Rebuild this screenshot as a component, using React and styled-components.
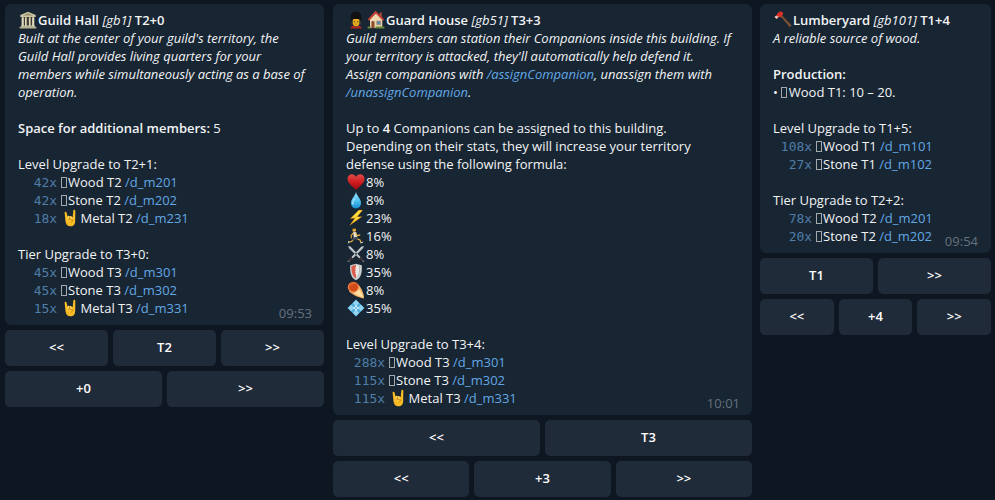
import React from "react";
import styled, { createGlobalStyle } from "styled-components";

const GlobalStyle = createGlobalStyle`
  * { box-sizing: border-box; }
  body { margin: 0; background: #0e1621; }
`;

const Page = styled.main`
  display: flex;
  align-items: flex-start;
  width: 995px;
  height: 500px;
  padding: 4px 4px 0 5px;
  overflow: hidden;
  background: #0e1621;
  color: #f2f4f5;
  font: 13px/18px "Open Sans", "Noto Sans", sans-serif;
`;
const Column = styled.section`
  display: grid;
  flex: none;
  gap: 5px;
  width: ${(p) => p.$width}px;
  margin-right: ${(p) => p.$gap || 0}px;
`;
const Bubble = styled.article`
  display: flex;
  flex-direction: column;
  padding: 7px 13px 3px;
  border-radius: 6px;
  background: #182533;
`;
const Line = styled.div`
  height: 18px;
  white-space: pre;
`;
const Description = styled(Line)`
  font-style: italic;
  letter-spacing: -0.014px;
`;
const Strong = styled.b`
  font-weight: 600;
`;
const Link = styled.a`
  color: #62a8e4;
`;
const Amount = styled.code`
  color: #4f7ea8;
  font: 13px/18px "DejaVu Sans Mono", monospace;
`;
const Time = styled.time`
  align-self: flex-end;
  height: 18px;
  margin: -13px ${(p) => (p.$tight ? 0 : -1)}px 0 0;
  color: #64727f;
`;
const Keys = styled.div`
  display: grid;
  grid-template-columns: repeat(${(p) => p.$count}, 1fr);
  gap: 5px;
`;
const Key = styled.button`
  height: 36px;
  padding: 0 0 2px;
  border: 0;
  border-radius: 5px;
  background: #1f2b38;
  color: #fff;
  font: 600 13px/18px "Open Sans", "Noto Sans", sans-serif;
`;
const Glyph = styled.svg`
  width: 18px;
  height: 18px;
  margin: 0 1px;
  vertical-align: top;
`;
const MissingGlyph = styled.span`
  display: inline-block;
  width: 6px;
  height: 11px;
  margin: 0 1.5px 0 0;
  border: 1px solid #a4aaab;
  vertical-align: -1px;
`;

const art = {
  hall: (
    <>
      <path d="M9 .8 16.7 4v2H1.3V4z" fill="#c9c3a0" />
      <path d="M9 2.2 14 4.6H4z" fill="#99916f" />
      <path d="M3 6h12v9H3z" fill="#3d3a33" />
      <path d="M2.6 6.2h2.2V15H2.6zM6 6.2h1.7V15H6zM9.9 6.2h1.7V15H9.9zM13.1 6.2h2.2V15h-2.2z" fill="#dfd9b9" />
      <path d="M2 14.6h14v1.2H2z" fill="#e0dbc0" />
      <path d="M.6 15.8h16.8v1.7H.6z" fill="#bbb48f" />
    </>
  ),
  guard: (
    <>
      <path d="M5.8 8h6.6v3.4c0 2.6-1.2 4-3.3 4s-3.3-1.4-3.3-4z" fill="#eab023" />
      <path d="M4.2 10C3 4.4 4 .8 9.1 .8S15.2 4.4 14 10l-1.4-1.6c-2.2-.8-4.8-.8-7 0z" fill="#121111" />
      <path d="M6.9 10.2h1.2v1H6.9zm3.3 0h1.2v1h-1.2z" fill="#4c3012" />
      <path d="M7.9 13h2.5" stroke="#a46a19" strokeWidth=".7" />
      <path d="M5.2 10v3.5m7.8-3.5v3.5" stroke="#7d6023" strokeWidth=".7" />
      <path d="M3.7 17.5c.1-1.6 1-2.4 2.9-2.7l2.5 1.4 2.5-1.4c1.9.3 2.8 1.1 2.9 2.7z" fill="#b8261f" />
    </>
  ),
  house: (
    <>
      <path d="M12.6 1.5h2.2v5h-2.2z" fill="#a64b35" />
      <path d="M3 8 9 2.2 15.3 8v9H3z" fill="#eed7ae" />
      <path d="m1.4 9.1 7.2-8 8 8" fill="none" stroke="#c44336" strokeWidth="1.9" />
      <path d="M4.4 10.2h3.1v7.1H4.4z" fill="#8d4c31" />
      <path d="M9.7 10h4v3.8h-4z" fill="#598baf" stroke="#b48761" strokeWidth=".6" />
      <path d="M.7 15.5h3v2h-3zm7.8 0h8.9v2H8.5z" fill="#66893b" />
    </>
  ),
  axe: (
    <>
      <path d="M6.4 2.6 17.2 14c.6 1.1-.9 2.3-1.8 1.5L5.4 4z" fill="#8c5a38" />
      <path d="m8 5.2 8.3 9.5" stroke="#5c3825" strokeWidth=".7" />
      <path d="M5.4.8c1.7-.6 3.6.3 3.9 2L6.6 6.4C5.2 5.5 4.2 6 2.8 8L.6 6C2 5 3.1 2.9 5.4.8z" fill="#dc3028" />
      <path d="M.5 6 2.7 8c1-1.7 1.8-2.2 2.4-2.3L1.8 4.9z" fill="#ded6d0" />
    </>
  ),
  heart: (
    <>
      <path d="M9 17C5.4 13.2.7 10.3.5 5.7.3 1.4 6.5-.8 9 4c2.5-4.8 8.7-2.6 8.5 1.7C17.3 10.3 12.6 13.2 9 17z" fill="url(#heartRed)" />
      <defs>
        <linearGradient id="heartRed" x1="0" y1="0" x2="0" y2="1">
          <stop stopColor="#e24a48" /><stop offset=".55" stopColor="#cc191d" /><stop offset="1" stopColor="#980c12" />
        </linearGradient>
      </defs>
    </>
  ),
  drop: (
    <>
      <path d="M9 .8c.5 3.8 5 6.8 5 11.2 0 3.2-2.1 5.4-5 5.4S4 15.2 4 12C4 7.6 8.5 4.6 9 .8z" fill="url(#dropBlue)" />
      <path d="M7.8 7.5c-1.7 2.2-2.5 4.3-1.7 6" stroke="#b8ecff" strokeWidth="1.2" fill="none" />
      <defs>
        <linearGradient id="dropBlue" x1="0" y1="0" x2="0" y2="1">
          <stop stopColor="#9cdef6" /><stop offset=".5" stopColor="#54c5f4" /><stop offset="1" stopColor="#168fd1" />
        </linearGradient>
      </defs>
    </>
  ),
  bolt: (
    <>
      <path d="m11.8 1-8.7 8.8 4.7-.5-5.5 7.5 13-9.3-4.9.3L15.8 1z" fill="#f9ae19" />
      <path d="m11.9 1.7-7 7 4.6-.5-4.1 5.3 7.8-5.4-5 .1L14.5 1.7z" fill="#ffe34a" />
    </>
  ),
  runner: (
    <>
      <circle cx="7.2" cy="2.9" r="1.9" fill="#e9b13a" />
      <path d="M5.2 3C4.9.8 8.2.1 9.1 1.9L7 2.1z" fill="#5c3a1b" />
      <path d="M6.8 5.8 4.2 8.2l.2 2.6" fill="none" stroke="#dca536" strokeWidth="1.2" strokeLinecap="round" />
      <path d="m6.4 5 2.9.3.8 5-3.4.6z" fill="#e8e6df" />
      <path d="m8.7 6.4 1.7 2.4 2.4-.9" fill="none" stroke="#f0bb42" strokeWidth="1.2" strokeLinecap="round" />
      <path d="m6.7 10.3 3.4-.5 1.4 2-1.3 1-2-.9-1.8 2.2-1.6-.8z" fill="#4a5260" />
      <path d="m10.6 12.1 2.4.9 1 2.8M5.8 13.3l-1.5 1.4-2.4.2" fill="none" stroke="#e3ad3b" strokeWidth="1.2" />
      <path d="m13.5 16 2.6-.9M1.9 14l-.4 2.3" stroke="#ddd" strokeWidth="1" />
    </>
  ),
  swords: (
    <>
      <path d="m1.2 1 2.5.7 10 10.6-1.3 1.2L2 3.3zM16.8 1l-2.5.7-10 10.6 1.3 1.2L16 3.3z" fill="#d6dee2" />
      <path d="m2.3 2.2 10.4 10.7M15.7 2.2 5.3 12.9" stroke="#7b858d" strokeWidth=".5" />
      <path d="m2.8 11.4 3.7 3.7m8.7-3.7-3.7 3.7" stroke="#343035" strokeWidth="1.3" />
      <path d="m4.2 13.4-2.6 2.8m12.2-2.8 2.6 2.8" stroke="#49383a" strokeWidth="1.6" />
      <path d="M.7 16.3h1.8m13 0h1.8" stroke="#8f9094" strokeWidth="1.1" />
    </>
  ),
  shield: (
    <>
      <path d="M3.2 2.2 9 .7l5.8 1.5c.5 7.3-.6 12.5-5.8 15C3.8 14.7 2.7 9.5 3.2 2.2z" fill="#c7cbcb" />
      <path d="M4.5 3.3 9 2v13.5C5.4 13.2 4.3 9.1 4.5 3.3z" fill="#dc5b4c" />
      <path d="m9 2 4.5 1.3C13.7 9.1 12.6 13.2 9 15.5z" fill="#eceae5" />
      <path d="m9 4-1.2.9L9 5.8l-1.2.9L9 7.6l-1.2.9L9 9.4l-1.2.9L9 11.2z" fill="#efe2df" />
      <path d="M12.6 3.1c.3 5.3-.5 9-2.9 11.3" fill="none" stroke="#989ea0" strokeWidth=".7" />
    </>
  ),
  meteor: (
    <>
      <path d="M2 10.2C4 12.5 10.4 16.5 17 17.4 17.3 12.5 14 6.2 11.3 3.4z" fill="#f3b06b" />
      <path d="M5 10.5c3.1 2.5 7.3 5.2 11.3 6.1C15.8 13 12.7 8.7 10.5 7z" fill="#ffe0a1" />
      <circle cx="6.3" cy="6.2" r="5.5" fill="#ee8244" />
      <circle cx="6.5" cy="5.9" r="4.4" fill="#cf4b19" />
      <path d="M3.5 4.6c1-2 3.5-2.7 5-1.7" stroke="#e87935" strokeWidth="1" fill="none" />
    </>
  ),
  diamond: (
    <>
      <path d="m9 .5 8.5 8.5L9 17.5.5 9z" fill="#4ba7d7" />
      <path d="m9 1 3.2 3.2L9 7.4 5.8 4.2zM4.2 5.8 7.4 9l-3.2 3.2L1 9zM13.8 5.8 17 9l-3.2 3.2L10.6 9zM9 10.6l3.2 3.2L9 17l-3.2-3.2z" fill="#90d4ef" />
      <path d="m9 6 3 3-3 3-3-3z" fill="#d0f1fb" />
      <path d="m5 5 8 8m0-8-8 8" stroke="#5aafd9" strokeWidth=".8" />
    </>
  ),
  horns: (
    <>
      <path d="M2.6 3.6c0-1 1.8-1.1 2 .1L5.7 8h5l.6-6.3c.2-1.3 2-1.2 2 .2l-.1 10c-.2 3.3-1.6 5.4-4.7 5.4s-4.8-2.2-5-5.1z" fill="#f8bd25" />
      <path d="M5.5 7.2c1-.8 1.7-.3 2 .4.8-.8 2.2-.6 2.4.5l.2 3-4.3.2z" fill="#ffd85a" />
      <path d="M6 10.3c2.2-.6 4 .1 5 1l-2 2.3M7.6 7.8v2.3" fill="none" stroke="#bf7414" strokeWidth=".8" />
      <path d="m4.2 12.8 2 3.2" stroke="#dda01d" strokeWidth=".8" />
    </>
  ),
};

const Emoji = ({ name }) => (
  <Glyph viewBox="0 0 18 18" aria-hidden="true">{art[name]}</Glyph>
);

const Title = ({ icons, name, id, level }) => (
  <Line>
    {icons.map((i) => <Emoji key={i} name={i} />)}
    <Strong>{name} </Strong><i>[{id}]</i><Strong> {level}</Strong>
  </Line>
);

const Cost = ({ amount, item, code }) => (
  <Line>
    <Amount>{`${amount}x`.padStart(5)}</Amount>{" "}
    {item.startsWith("Metal") ? <Emoji name="horns" /> : <MissingGlyph />}
    {item} <Link>/d_m{code}</Link>
  </Line>
);

const Upgrade = ({ title, costs }) => (
  <>
    <Line />
    <Line>{title}:</Line>
    {costs.map(([amount, item, code]) => (
      <Cost key={code} amount={amount} item={item} code={code} />
    ))}
  </>
);

const Keyboard = ({ rows }) =>
  rows.map((row, r) => (
    <Keys key={r} $count={row.length}>
      {row.map((label, i) => <Key key={i}>{label}</Key>)}
    </Keys>
  ));

const stats = [
  ["heart", 8], ["drop", 8], ["bolt", 23], ["runner", 16],
  ["swords", 8], ["shield", 35], ["meteor", 8], ["diamond", 35],
];

export default function App() {
  return (
    <>
      <GlobalStyle />
      <Page>
        <Column $width={319} $gap={9}>
          <Bubble>
            <Title icons={["hall"]} name="Guild Hall" id="gb1" level="T2+0" />
            <Description>Built at the center of your guild's territory, the</Description>
            <Description>Guild Hall provides living quarters for your</Description>
            <Description>members while simultaneously acting as a base of</Description>
            <Description>operation.</Description>
            <Line />
            <Line><Strong>Space for additional members:</Strong> 5</Line>
            <Upgrade title="Level Upgrade to T2+1" costs={[[42, "Wood T2", 201], [42, "Stone T2", 202], [18, "Metal T2", 231]]} />
            <Upgrade title="Tier Upgrade to T3+0" costs={[[45, "Wood T3", 301], [45, "Stone T3", 302], [15, "Metal T3", 331]]} />
            <Time>09:53</Time>
          </Bubble>
          <Keyboard rows={[["<<", "T2", ">>"], ["+0", ">>"]]} />
        </Column>

        <Column $width={419} $gap={8}>
          <Bubble>
            <Title icons={["guard", "house"]} name="Guard House" id="gb51" level="T3+3" />
            <Description>Guild members can station their Companions inside this building. If</Description>
            <Description>your territory is attacked, they'll automatically help defend it.</Description>
            <Description>Assign companions with <Link>/assignCompanion</Link>, unassign them with</Description>
            <Description><Link>/unassignCompanion</Link>.</Description>
            <Line />
            <Line>Up to <Strong>4</Strong> Companions can be assigned to this building.</Line>
            <Line>Depending on their stats, they will increase your territory</Line>
            <Line>defense using the following formula:</Line>
            {stats.map(([icon, value]) => (
              <Line key={icon}><Emoji name={icon} />{value}%</Line>
            ))}
            <Upgrade title="Level Upgrade to T3+4" costs={[[288, "Wood T3", 301], [115, "Stone T3", 302], [115, "Metal T3", 331]]} />
            <Time>10:01</Time>
          </Bubble>
          <Keyboard rows={[["<<", "T3"], ["<<", "+3", ">>"]]} />
        </Column>

        <Column $width={231}>
          <Bubble>
            <Title icons={["axe"]} name="Lumberyard" id="gb101" level="T1+4" />
            <Description>A reliable source of wood.</Description>
            <Line />
            <Line><Strong>Production:</Strong></Line>
            <Line>• <MissingGlyph />Wood T1: 10 – 20.</Line>
            <Upgrade title="Level Upgrade to T1+5" costs={[[108, "Wood T1", 101], [27, "Stone T1", 102]]} />
            <Upgrade title="Tier Upgrade to T2+2" costs={[[78, "Wood T2", 201], [20, "Stone T2", 202]]} />
            <Time $tight>09:54</Time>
          </Bubble>
          <Keyboard rows={[["T1", ">>"], ["<<", "+4", ">>"]]} />
        </Column>
      </Page>
    </>
  );
}
